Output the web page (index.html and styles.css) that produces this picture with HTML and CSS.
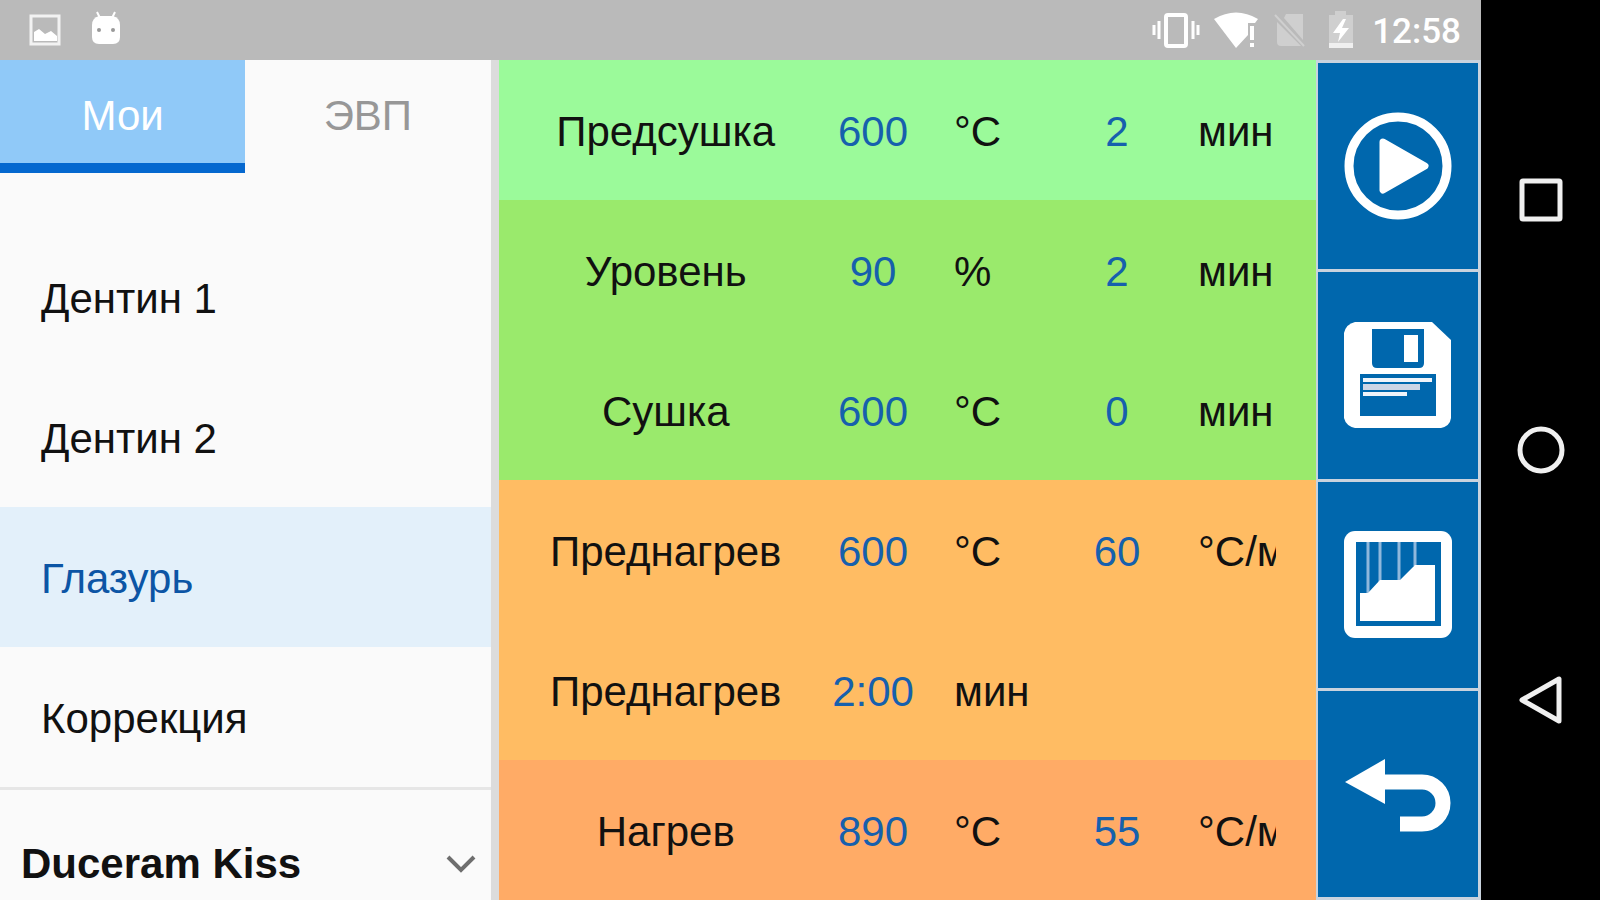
FILE: index.html
```
<!DOCTYPE html>
<html lang="ru">
<head>
    <meta charset="UTF-8">
    <meta name="viewport" content="width=device-width, initial-scale=1.0">
    <title>Программы</title>
    <link rel="stylesheet" href="styles.css">
</head>
<body>

    <div class="screen">
        <header class="status-bar">
            <svg class="icon-image" width="32" height="32" viewBox="0 0 32 32">
                <path d="M2 2h28v28H2z" fill="none" stroke="#f2f2f2" stroke-width="3"/>
                <path d="M5 27v-9l5-3 6 5 6-3 6 5v5z" fill="#fff"/>
            </svg>
            <svg class="icon-android" width="30" height="34" viewBox="0 0 30 34">
                <path d="M6 1l3 6M24 1l-3 6" stroke="#fff" stroke-width="2"/>
                <path d="M8 5h14q7 2 7 9v12q0 7-7 7H8q-7 0-7-7V14q0-7 7-9z" fill="#fff"/>
                <circle cx="8" cy="19" r="2" fill="#999"/>
                <circle cx="22" cy="19" r="2" fill="#999"/>
            </svg>
            <div class="status-right">
                <svg width="48" height="36" viewBox="0 0 48 36">
                    <rect x="14" y="3" width="20" height="31" rx="2" fill="none" stroke="#fff" stroke-width="4"/>
                    <path d="M2 13v10M7 9v18M41 9v18M46 13v10" stroke="#fff" stroke-width="3"/>
                </svg>
                <svg width="46" height="36" viewBox="0 0 46 36">
                    <path d="M0 7Q22-6 44 7l-3 4h-7v12L22 36z" fill="#fff"/>
                    <path d="M38 14v14M38 31v4" stroke="#fff" stroke-width="4"/>
                </svg>
                <svg width="32" height="36" viewBox="0 0 32 36">
                    <path d="M12 2h17v26L10 6zM3 10l24 24H7q-4 0-4-4z" fill="#cfcfcf"/>
                    <path d="M1 3l29 31" stroke="#cfcfcf" stroke-width="2"/>
                </svg>
                <svg class="icon-battery" width="26" height="38" viewBox="0 0 26 38">
                    <path d="M7 0h11v4h7v33H1V4h6z" fill="#cfcfcf"/>
                    <path d="M1 32h24v5H1z" fill="#efefef"/>
                    <path d="M15 8L5 22h7l-2 9 11-14h-7l4-9z" fill="#fff"/>
                </svg>
                <span class="clock">12:58</span>
            </div>
        </header>

        <main class="content">
            <aside class="sidebar">
                <div class="tabs">
                    <button type="button" class="tab active">Мои</button>
                    <button type="button" class="tab">ЭВП</button>
                </div>
                <ul class="programs">
                    <li><button type="button" class="program">Дентин 1</button></li>
                    <li><button type="button" class="program">Дентин 2</button></li>
                    <li><button type="button" class="program selected">Глазурь</button></li>
                    <li><button type="button" class="program">Коррекция</button></li>
                </ul>
                <button type="button" class="group">
                    <span>Duceram Kiss</span>
                    <svg width="30" height="20" viewBox="0 0 30 20">
                        <path d="M2 3l13 13L28 3" fill="none" stroke="#6e6e6e" stroke-width="4"/>
                    </svg>
                </button>
            </aside>

            <section class="stages">
                <table>
                    <colgroup>
                        <col>
                        <col class="col-value">
                        <col class="col-unit">
                        <col class="col-value">
                        <col class="col-unit">
                    </colgroup>
                    <tbody>
                        <tr class="predry">
                            <th scope="row">Предсушка</th>
                            <td><button type="button">600</button></td>
                            <td class="unit"><div>°C</div></td>
                            <td><button type="button">2</button></td>
                            <td class="unit"><div>мин</div></td>
                        </tr>
                        <tr class="dry">
                            <th scope="row">Уровень</th>
                            <td><button type="button">90</button></td>
                            <td class="unit"><div>%</div></td>
                            <td><button type="button">2</button></td>
                            <td class="unit"><div>мин</div></td>
                        </tr>
                        <tr class="dry">
                            <th scope="row">Сушка</th>
                            <td><button type="button">600</button></td>
                            <td class="unit"><div>°C</div></td>
                            <td><button type="button">0</button></td>
                            <td class="unit"><div>мин</div></td>
                        </tr>
                        <tr class="preheat">
                            <th scope="row">Преднагрев</th>
                            <td><button type="button">600</button></td>
                            <td class="unit"><div>°C</div></td>
                            <td><button type="button">60</button></td>
                            <td class="unit"><div>°C/мин</div></td>
                        </tr>
                        <tr class="preheat">
                            <th scope="row">Преднагрев</th>
                            <td><button type="button">2:00</button></td>
                            <td class="unit"><div>мин</div></td>
                            <td></td>
                            <td></td>
                        </tr>
                        <tr class="heat">
                            <th scope="row">Нагрев</th>
                            <td><button type="button">890</button></td>
                            <td class="unit"><div>°C</div></td>
                            <td><button type="button">55</button></td>
                            <td class="unit"><div>°C/мин</div></td>
                        </tr>
                    </tbody>
                </table>
            </section>

            <nav class="toolbar">
                <!-- start -->
                <button type="button" aria-label="Старт">
                    <svg width="108" height="108" viewBox="0 0 108 108">
                        <circle cx="54" cy="54" r="49" fill="none" stroke="#fff" stroke-width="9"/>
                        <path d="M39 30l42 24-42 24z" fill="#fff" stroke="#fff" stroke-width="7" stroke-linejoin="round"/>
                    </svg>
                </button>
                <!-- save -->
                <button type="button" aria-label="Сохранить">
                    <svg width="108" height="108" viewBox="0 0 108 108">
                        <path d="M11 1h77l19 18v78q-1 8-10 10H11q-9-2-11-10V12Q2 3 11 1z" fill="#fff"/>
                        <path d="M28 8h52v34q0 5-5 5H33q-5 0-5-5z" fill="#0067ad"/>
                        <path d="M60 14h14v27H60z" fill="#fff"/>
                        <path d="M16 53h76v42H16z" fill="#0067ad"/>
                        <path d="M19 57h69v4H19zM19 71h44v4H19z" fill="#f0f4fa"/>
                        <path d="M19 63h57v6H19z" fill="#cdd6e6"/>
                    </svg>
                </button>
                <!-- chart -->
                <button type="button" aria-label="График">
                    <svg width="108" height="108" viewBox="0 0 108 108">
                        <rect width="108" height="107" rx="11" fill="#fff"/>
                        <path d="M12 11h85v84H12z" fill="#0067ad"/>
                        <path d="M24 11v52M36 11v40M55 11v40M71 11v24" stroke="#8fb8dc" stroke-width="3"/>
                        <path d="M16 62h8l12-13h20l15-15h20v56H16z" fill="#fff"/>
                    </svg>
                </button>
                <!-- back -->
                <button type="button" aria-label="Назад">
                    <svg width="108" height="108" viewBox="0 0 108 108">
                        <path d="M1 42l40-23v45z" fill="#fff"/>
                        <path d="M40 42h38a21 21 0 0 1 0 42H56" fill="none" stroke="#fff" stroke-width="15"/>
                    </svg>
                </button>
            </nav>
        </main>
    </div>

    <nav class="system-nav">
        <button type="button">
            <svg width="50" height="50" viewBox="0 0 50 50"><rect x="6" y="6" width="38" height="38" rx="1"/></svg>
        </button>
        <button type="button">
            <svg width="50" height="50" viewBox="0 0 50 50"><circle cx="25" cy="25" r="21"/></svg>
        </button>
        <button type="button">
            <svg width="50" height="50" viewBox="0 0 50 50"><path d="M6 25L43 4v42z"/></svg>
        </button>
    </nav>

</body>
</html>
```
FILE: styles.css
```
* {
    box-sizing: border-box;
}
body {
    display: flex;
    height: 100vh;
    margin: 0;
    overflow: hidden;
    background-color: #fafafa;
    color: #111;
    font-family: "Liberation Sans", Arial, sans-serif;
    font-size: 42px;
}
button {
    border: none;
    padding: 0;
    background: none;
    color: inherit;
    font: inherit;
    cursor: pointer;
}
svg {
    display: block;
}
.screen {
    flex: 1;
    display: flex;
    flex-direction: column;
    min-width: 0;
}

/* status bar */
.status-bar {
    display: flex;
    align-items: center;
    gap: 30px;
    flex: none;
    height: 60px;
    padding: 0 20px 0 29px;
    background-color: #bababa;
}
.icon-android {
    margin-bottom: 4px;
}
.status-right {
    display: flex;
    align-items: center;
    gap: 14px;
    margin-left: auto;
}
.icon-battery {
    margin: 0 4px 0 8px;
}
.clock {
    padding-top: 4px;
    color: white;
    font-family: Roboto, sans-serif;
    font-size: 35px;
    font-weight: 500;
    line-height: 40px;
}

.content {
    flex: 1;
    display: grid;
    grid-template-columns: minmax(0, 3fr) 8px minmax(0, 5fr) 165px;
    min-height: 0;
    background-color: #dcdcdc;
}

/* program list */
.sidebar {
    grid-column: 1;
    overflow: hidden;
    background-color: #fafafa;
}
.tabs {
    display: flex;
    margin-bottom: 54px;
}
.tab {
    flex: 1;
    height: 113px;
    padding-top: 8px;
    border-bottom: 10px solid transparent;
    color: #979797;
}
.tab.active {
    border-bottom-color: #0568cf;
    background-color: #90c9f8;
    color: white;
}
.programs {
    margin: 0;
    padding: 0;
    border-bottom: 3px solid #e6e6e6;
    list-style: none;
}
.program {
    display: block;
    width: 100%;
    height: 140px;
    padding: 3px 41px 0;
    text-align: left;
}
.program.selected {
    background-color: #e3f0fa;
    color: #0c55a5;
}
.group {
    display: flex;
    align-items: center;
    justify-content: space-between;
    width: 100%;
    height: 144px;
    padding: 3px 15px 0 21px;
    font-weight: bold;
}

/* firing stages */
.stages {
    grid-column: 3;
    overflow: hidden;
}
table {
    width: 100%;
    table-layout: fixed;
    border-collapse: collapse;
}
.col-value {
    width: 90px;
}
.col-unit {
    width: 154px;
}
tr {
    height: 140px;
}
th, td {
    padding: 3px 0 0;
    text-align: center;
    white-space: nowrap;
}
th {
    padding-left: 5px;
    font-weight: normal;
}
td button {
    color: #1660ad;
}
.unit {
    padding: 3px 40px 0 36px;
    text-align: left;
}
.unit div {
    overflow: hidden;
}
.predry {
    background-color: #9bfa9a;
}
.dry {
    background-color: #9aea6c;
}
.preheat {
    background-color: #ffbc63;
}
.heat {
    background-color: #ffab66;
}

/* actions */
.toolbar {
    grid-column: 4;
    display: flex;
    flex-direction: column;
    gap: 3px;
    padding: 3px 3px 3px 2px;
    background-color: #c9d3de;
}
.toolbar button {
    display: flex;
    flex: 1;
    align-items: center;
    justify-content: center;
    background-color: #0067ad;
}

.system-nav {
    display: flex;
    flex-direction: column;
    flex: none;
    width: 119px;
    padding: 75px 0;
    background-color: black;
}
.system-nav button {
    display: flex;
    flex: 1;
    align-items: center;
    justify-content: center;
}
.system-nav svg {
    fill: none;
    stroke: #f0f0f0;
    stroke-width: 5;
    stroke-linejoin: round;
}
```
